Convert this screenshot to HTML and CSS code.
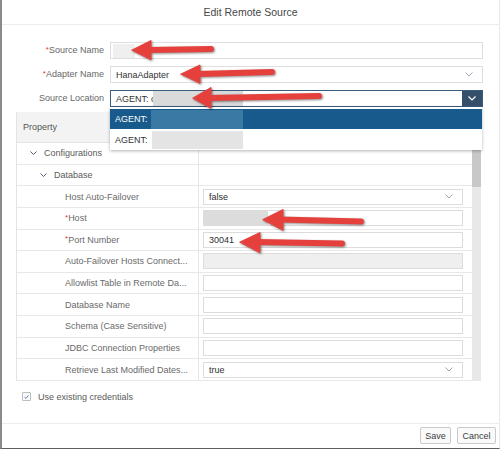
FILE: index.html
```html
<!DOCTYPE html>
<html>
<head>
<meta charset="utf-8">
<link rel="stylesheet" href="styles.css">
</head>
<body>
<div class="stage">
  <div class="dialog">
    <header class="dlg-head">Edit Remote Source</header>
    <div class="dlg-body">
      <div class="form">
        <label class="lbl"><span class="req">*</span>Source Name</label>
        <div class="field"><span class="redact redact-name"></span></div>
        <label class="lbl"><span class="req">*</span>Adapter Name</label>
        <div class="field select"><span class="val">HanaAdapter</span>
          <svg class="chev" width="8" height="5" viewBox="0 0 8 5"><path d="M0.5 0.5 L4 4 L7.5 0.5" fill="none" stroke="#9aa6b4" stroke-width="1"/></svg>
        </div>
        <label class="lbl">Source Location</label>
        <div class="field focus"><span class="val">AGENT: c</span><span class="redact redact-loc"></span>
          <span class="dropbtn"><svg width="8" height="5" viewBox="0 0 8 5"><path d="M0.5 0.5 L4 4 L7.5 0.5" fill="none" stroke="#ffffff" stroke-width="1.2"/></svg></span>
        </div>
      </div>

      <div class="tbl">
        <div class="thead">
          <div class="th">Property</div>
          <div class="th th-v"></div>
        </div>
        <div class="tbody">
          <div class="rows">
            <div class="row">
              <div class="cell-l tree1"><svg class="tchev" width="7" height="4" viewBox="0 0 7 4"><path d="M0.5 0.5 L3.5 3.5 L6.5 0.5" fill="none" stroke="#4c5c70" stroke-width="1"/></svg>Configurations</div>
              <div class="cell-v"></div>
            </div>
            <div class="row">
              <div class="cell-l tree2"><svg class="tchev" width="7" height="4" viewBox="0 0 7 4"><path d="M0.5 0.5 L3.5 3.5 L6.5 0.5" fill="none" stroke="#4c5c70" stroke-width="1"/></svg>Database</div>
              <div class="cell-v"></div>
            </div>
            <div class="row">
              <div class="cell-l">Host Auto-Failover</div>
              <div class="cell-v"><div class="inp select"><span class="val">false</span><svg class="chev" width="8" height="5" viewBox="0 0 8 5"><path d="M0.5 0.5 L4 4 L7.5 0.5" fill="none" stroke="#9aa6b4" stroke-width="1"/></svg></div></div>
            </div>
            <div class="row">
              <div class="cell-l"><span class="req">*</span>Host</div>
              <div class="cell-v"><div class="inp nopad"><span class="redact redact-host"></span></div></div>
            </div>
            <div class="row">
              <div class="cell-l"><span class="req">*</span>Port Number</div>
              <div class="cell-v"><div class="inp"><span class="val">30041</span></div></div>
            </div>
            <div class="row">
              <div class="cell-l">Auto-Failover Hosts Connect...</div>
              <div class="cell-v"><div class="inp disabled"></div></div>
            </div>
            <div class="row">
              <div class="cell-l">Allowlist Table in Remote Da...</div>
              <div class="cell-v"><div class="inp"></div></div>
            </div>
            <div class="row">
              <div class="cell-l">Database Name</div>
              <div class="cell-v"><div class="inp"></div></div>
            </div>
            <div class="row">
              <div class="cell-l">Schema (Case Sensitive)</div>
              <div class="cell-v"><div class="inp"></div></div>
            </div>
            <div class="row">
              <div class="cell-l">JDBC Connection Properties</div>
              <div class="cell-v"><div class="inp"></div></div>
            </div>
            <div class="row">
              <div class="cell-l">Retrieve Last Modified Dates...</div>
              <div class="cell-v"><div class="inp select"><span class="val">true</span><svg class="chev" width="8" height="5" viewBox="0 0 8 5"><path d="M0.5 0.5 L4 4 L7.5 0.5" fill="none" stroke="#9aa6b4" stroke-width="1"/></svg></div></div>
            </div>
          </div>
          <div class="scroll"><div class="thumb"></div></div>
        </div>
      </div>

      <div class="check">
        <span class="cbox"><svg width="8" height="8" viewBox="0 0 8 8"><path d="M1.8 4.2 L3.3 5.6 L6.2 2.3" fill="none" stroke="#3a6db5" stroke-width="1"/></svg></span>
        <span>Use existing credentials</span>
      </div>
    </div>
    <footer class="dlg-foot">
      <button class="btn btn-save">Save</button>
      <button class="btn btn-cancel">Cancel</button>
    </footer>
  </div>

  <div class="popup">
    <div class="opt sel"><span>AGENT:</span><span class="redact redact-opt1"></span></div>
    <div class="opt"><span>AGENT:</span><span class="redact redact-opt2"></span></div>
  </div>

  <svg class="arrows" width="500" height="451" viewBox="0 0 500 451">
    <g fill="#e6403d" stroke="#e6403d" stroke-linecap="round">
      <line x1="148" y1="50" x2="211" y2="49" stroke-width="6"/>
      <polygon points="132,50 151,40.5 151,59.5" stroke-width="1" stroke-linejoin="round"/>

      <line x1="197" y1="74" x2="272" y2="72" stroke-width="6"/>
      <polygon points="181,74 200,65 200,83" stroke-width="1" stroke-linejoin="round"/>

      <line x1="208" y1="98" x2="319" y2="96" stroke-width="6"/>
      <polygon points="193,98 211,87.5 211,108" stroke-width="1" stroke-linejoin="round"/>

      <line x1="280" y1="219.5" x2="361" y2="221.5" stroke-width="6"/>
      <polygon points="263,219.5 283,209.5 283,230" stroke-width="1" stroke-linejoin="round"/>

      <line x1="257" y1="242" x2="342" y2="243.5" stroke-width="6"/>
      <polygon points="240,242 260,232.5 260,252.5" stroke-width="1" stroke-linejoin="round"/>
    </g>
  </svg>
</div>
</body>
</html>
```

FILE: styles.css
```css
body {
  margin: 0;
  background: #ffffff;
  font-family: "Liberation Sans", Arial, sans-serif;
}

.stage {
  position: relative;
  width: 500px;
  height: 451px;
  overflow: hidden;
  background: #ffffff;
}

.dialog {
  box-sizing: border-box;
  width: 500px;
  height: 449px;
  border-left: 2px solid #8a8a8a;
  border-right: 1px solid #e8e8e8;
  border-bottom: 1px solid #5e5e5e;
  display: flex;
  flex-direction: column;
  background: #ffffff;
}

.dlg-head {
  flex: none;
  height: 24px;
  border-bottom: 1px solid #ececec;
  text-align: center;
  font-size: 10.5px;
  line-height: 24px;
  color: #474747;
}

.dlg-body {
  flex: 1;
}

.form {
  display: grid;
  grid-template-columns: 102px 373px;
  grid-auto-rows: 17px;
  column-gap: 6px;
  row-gap: 7px;
  padding-top: 17px;
}

.lbl {
  text-align: right;
  font-size: 9px;
  line-height: 17px;
  color: #676767;
  white-space: nowrap;
}

.req {
  color: #e2333a;
  font-size: 8px;
  position: relative;
  top: -1px;
}

.field {
  box-sizing: border-box;
  border: 1px solid #dedede;
  background: #ffffff;
  display: flex;
  align-items: center;
  padding-left: 5px;
  font-size: 9px;
  color: #333333;
}

.field.focus {
  border-color: #3a5c7e;
}

.chev {
  margin-left: auto;
  margin-right: 9px;
}

.redact {
  display: block;
  background: #dadada;
}

.redact-name {
  width: 22px;
  height: 14px;
  margin-left: -3px;
  background: #efefef;
}

.redact-loc {
  width: 90px;
  align-self: stretch;
  margin-left: -3px;
}

.dropbtn {
  margin-left: auto;
  width: 20px;
  align-self: stretch;
  background: #354f6b;
  display: flex;
  align-items: center;
  justify-content: center;
}

/* table */
.tbl {
  box-sizing: border-box;
  width: 465px;
  margin: 5px 0 0 14px;
  border-left: 1px solid #e4e4e4;
}

.thead {
  display: grid;
  grid-template-columns: 182px 1fr;
  height: 31px;
  box-sizing: border-box;
  background: #f3f3f3;
  border-bottom: 1px solid #e4e4e4;
}

.th {
  font-size: 9px;
  color: #555555;
  display: flex;
  align-items: center;
  padding-left: 6px;
  border-right: 1px solid #e4e4e4;
}

.th-v {
  border-right: none;
}

.tbody {
  display: flex;
}

.rows {
  width: 455px;
}

.row {
  display: grid;
  grid-template-columns: 182px 273px;
  height: 21.64px;
  box-sizing: border-box;
  border-bottom: 1px solid #e8e8e8;
}

.cell-l {
  border-right: 1px solid #e6e6e6;
  font-size: 9px;
  color: #6a6a6a;
  display: flex;
  align-items: center;
  padding-left: 48px;
  white-space: nowrap;
  overflow: hidden;
}

.cell-l.tree1 {
  padding-left: 13px;
  color: #5a5a5a;
}

.cell-l.tree2 {
  padding-left: 23px;
  color: #5a5a5a;
}

.tchev {
  margin-right: 7px;
}

.cell-v {
  display: flex;
  align-items: center;
  padding-left: 4px;
}

.inp {
  box-sizing: border-box;
  width: 260px;
  height: 16px;
  border: 1px solid #dcdcdc;
  background: #ffffff;
  display: flex;
  align-items: center;
  padding-left: 5px;
  font-size: 9px;
  color: #2e2e2e;
}

.inp.nopad {
  padding-left: 0;
}

.inp.disabled {
  background: #efefef;
}

.redact-host {
  width: 64px;
  align-self: stretch;
  background: #dcdcdc;
}

.scroll {
  width: 9px;
  background: #e8e8e8;
  position: relative;
}

.thumb {
  position: absolute;
  left: 0;
  top: 0;
  width: 9px;
  height: 44px;
  background: #c8c8c8;
}

/* checkbox */
.check {
  display: flex;
  align-items: center;
  gap: 7px;
  margin: 11px 0 0 20px;
  font-size: 9px;
  color: #5a5a5a;
}

.cbox {
  box-sizing: border-box;
  width: 9px;
  height: 9px;
  border: 1px solid #bdbdbd;
  border-radius: 1px;
  display: flex;
  align-items: center;
  justify-content: center;
  background: #fafafa;
}

.cbox svg {
  display: block;
}

/* footer */
.dlg-foot {
  flex: none;
  box-sizing: border-box;
  height: 25px;
  border-top: 1px solid #ececec;
  display: flex;
  justify-content: flex-end;
  align-items: flex-start;
  gap: 6px;
  padding: 3px 3px 0 0;
}

.btn {
  box-sizing: border-box;
  height: 17px;
  padding: 0;
  font-family: "Liberation Sans", Arial, sans-serif;
  font-size: 9px;
  color: #3a3a3a;
  background: #fafafa;
  border: 1px solid #c9c9c9;
  border-radius: 2px;
}

.btn-save {
  width: 31px;
}

.btn-cancel {
  width: 39px;
}

/* dropdown popup */
.popup {
  position: absolute;
  left: 110px;
  top: 107px;
  width: 372px;
  padding-top: 2px;
  background: #ffffff;
  box-shadow: 0 1px 3px rgba(0, 0, 0, 0.3);
}

.opt {
  height: 21px;
  display: flex;
  align-items: center;
  padding-left: 5px;
  font-size: 9px;
  color: #333333;
}

.opt.sel {
  height: 20px;
  background: #175a8b;
  color: #ffffff;
}

.redact-opt1 {
  width: 92px;
  height: 19px;
  margin-left: 3px;
  background: #3b79a5;
}

.redact-opt2 {
  width: 91px;
  height: 18px;
  margin-left: 4px;
  background: #e4e4e4;
}

/* annotation arrows */
.arrows {
  position: absolute;
  left: 0;
  top: 0;
  pointer-events: none;
  filter: drop-shadow(1px 1.5px 1px rgba(0, 0, 0, 0.45));
}
```
